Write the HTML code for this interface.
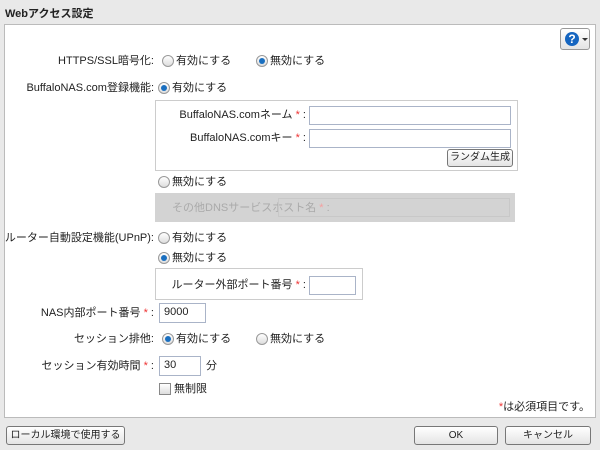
<!DOCTYPE html>
<html><head><meta charset="utf-8"><style>
body{margin:0;width:600px;height:450px;background:#e9e9e9;font-family:"Liberation Sans","Noto Sans CJK JP",sans-serif;font-size:11px;color:#222;position:relative;overflow:hidden}
.a{position:absolute;white-space:nowrap;line-height:14px}
.r{text-align:right}
.rad{position:absolute;width:10px;height:10px;border:1px solid #999;border-radius:50%;background:linear-gradient(#fff,#ddd)}
.rad.on::after{content:"";position:absolute;left:2px;top:2px;width:6px;height:6px;border-radius:50%;background:#1a6fc0}
.inp{position:absolute;background:#fff;border:1px solid #aab4c8;box-sizing:border-box;padding:2px 4px;line-height:13px}
.box{position:absolute;border:1px solid #ccc;background:#fff;box-sizing:border-box}
.btn{position:absolute;box-sizing:border-box;border:1px solid #777;border-radius:3px;background:linear-gradient(#fff,#e4e4e4);text-align:center;line-height:17px;white-space:nowrap;font-size:10px;overflow:hidden}
.s{color:#e33}
</style></head><body>
<div class="a" style="left:5px;top:7px;font-weight:bold">Webアクセス設定</div>
<div class="box" style="left:4px;top:24px;width:592px;height:394px;border-color:#bbb"></div>
<div class="btn" style="left:560px;top:28px;width:30px;height:22px;border-color:#999">
<div style="position:absolute;left:4px;top:3px;width:14px;height:14px;border-radius:50%;background:#1565c0;color:#fff;font-weight:bold;font-size:12px;line-height:14px">?</div>
<div style="position:absolute;left:21px;top:9px;border:3px solid transparent;border-top:3px solid #333;width:0;height:0"></div></div>

<div class="a r" style="right:446px;top:54px">HTTPS/SSL暗号化:</div>
<div class="rad" style="left:162px;top:55px"></div><div class="a" style="left:176px;top:54px">有効にする</div>
<div class="rad on" style="left:256px;top:55px"></div><div class="a" style="left:270px;top:54px">無効にする</div>

<div class="a r" style="right:446px;top:81px">BuffaloNAS.com登録機能:</div>
<div class="rad on" style="left:158px;top:82px"></div><div class="a" style="left:172px;top:81px">有効にする</div>
<div class="box" style="left:155px;top:100px;width:363px;height:71px"></div>
<div class="a r" style="right:294px;top:108px">BuffaloNAS.comネーム <span class="s">*</span> :</div>
<div class="inp" style="left:309px;top:106px;width:202px;height:19px"></div>
<div class="a r" style="right:294px;top:131px">BuffaloNAS.comキー <span class="s">*</span> :</div>
<div class="inp" style="left:309px;top:129px;width:202px;height:19px"></div>
<div class="btn" style="left:447px;top:149px;width:66px;height:18px;line-height:16px">ランダム生成</div>

<div class="rad" style="left:158px;top:176px"></div><div class="a" style="left:172px;top:175px">無効にする</div>
<div style="position:absolute;left:155px;top:193px;width:360px;height:29px;background:#d3d3d3"></div>
<div class="a" style="left:172px;top:201px;color:#aaa">その他DNSサービスホスト名 <span style="color:#f5a0a0">*</span> :</div>
<div style="position:absolute;left:278px;top:198px;width:232px;height:19px;border:1px solid #c8c8c8;box-sizing:border-box"></div>

<div class="a r" style="right:446px;top:231px">ルーター自動設定機能(UPnP):</div>
<div class="rad" style="left:158px;top:232px"></div><div class="a" style="left:172px;top:231px">有効にする</div>
<div class="rad on" style="left:158px;top:252px"></div><div class="a" style="left:172px;top:251px">無効にする</div>
<div class="box" style="left:155px;top:268px;width:208px;height:32px"></div>
<div class="a r" style="right:294px;top:278px">ルーター外部ポート番号 <span class="s">*</span> :</div>
<div class="inp" style="left:309px;top:276px;width:47px;height:19px"></div>

<div class="a r" style="right:446px;top:306px">NAS内部ポート番号 <span class="s">*</span> :</div>
<div class="inp" style="left:159px;top:303px;width:47px;height:20px">9000</div>

<div class="a r" style="right:446px;top:332px">セッション排他:</div>
<div class="rad on" style="left:162px;top:333px"></div><div class="a" style="left:176px;top:332px">有効にする</div>
<div class="rad" style="left:256px;top:333px"></div><div class="a" style="left:270px;top:332px">無効にする</div>

<div class="a r" style="right:446px;top:359px">セッション有効時間 <span class="s">*</span> :</div>
<div class="inp" style="left:159px;top:356px;width:42px;height:20px">30</div>
<div class="a" style="left:206px;top:359px">分</div>
<div style="position:absolute;left:159px;top:383px;width:10px;height:10px;border:1px solid #888;background:linear-gradient(#fff,#ddd)"></div>
<div class="a" style="left:174px;top:382px">無制限</div>
<div class="a r" style="right:10px;top:400px"><span class="s">*</span>は必須項目です。</div>

<div class="btn" style="left:6px;top:426px;width:119px;height:19px">ローカル環境で使用する</div>
<div class="btn" style="left:414px;top:426px;width:84px;height:19px">OK</div>
<div class="btn" style="left:505px;top:426px;width:86px;height:19px">キャンセル</div>
</body></html>
